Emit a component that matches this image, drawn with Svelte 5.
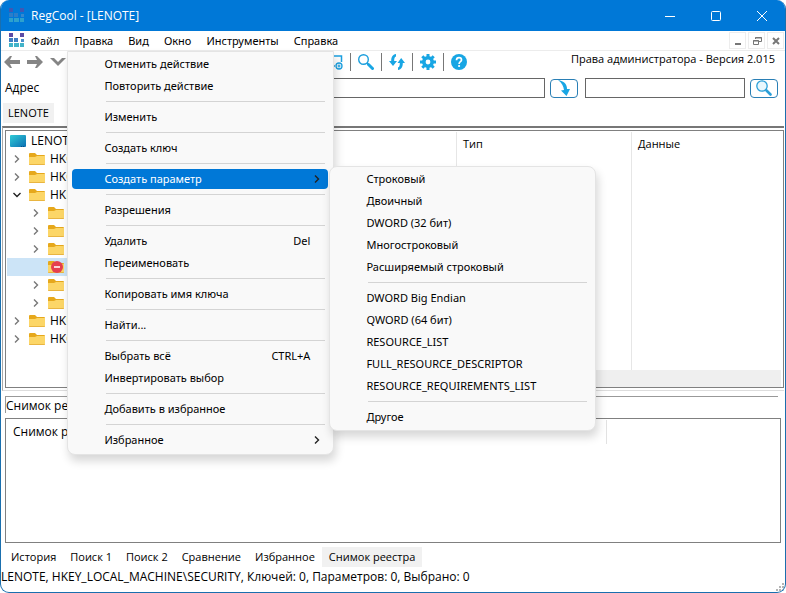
<script lang="ts">
	type Entry = { label?: string; keys?: string; sub?: boolean; sep?: boolean };

	const sep: Entry = { sep: true };

	const menus: string[] = ['Файл', 'Правка', 'Вид', 'Окно', 'Инструменты', 'Справка'];

	const editMenu: Entry[] = [
		{ label: 'Отменить действие' },
		{ label: 'Повторить действие' },
		sep,
		{ label: 'Изменить' },
		sep,
		{ label: 'Создать ключ' },
		sep,
		{ label: 'Создать параметр', sub: true },
		sep,
		{ label: 'Разрешения' },
		sep,
		{ label: 'Удалить', keys: 'Del' },
		{ label: 'Переименовать' },
		sep,
		{ label: 'Копировать имя ключа' },
		sep,
		{ label: 'Найти...' },
		sep,
		{ label: 'Выбрать всё', keys: 'CTRL+A' },
		{ label: 'Инвертировать выбор' },
		sep,
		{ label: 'Добавить в избранное' },
		sep,
		{ label: 'Избранное', sub: true }
	];

	const valueMenu: Entry[] = [
		{ label: 'Строковый' },
		{ label: 'Двоичный' },
		{ label: 'DWORD (32 бит)' },
		{ label: 'Многостроковый' },
		{ label: 'Расширяемый строковый' },
		sep,
		{ label: 'DWORD Big Endian' },
		{ label: 'QWORD (64 бит)' },
		{ label: 'RESOURCE_LIST' },
		{ label: 'FULL_RESOURCE_DESCRIPTOR' },
		{ label: 'RESOURCE_REQUIREMENTS_LIST' },
		sep,
		{ label: 'Другое' }
	];

	const keys = [
		{ name: 'HKCR' },
		{ name: 'HKCU' },
		{ name: 'HKLM', open: true },
		{ child: true },
		{ child: true },
		{ child: true },
		{ child: true, denied: true },
		{ child: true },
		{ child: true },
		{ name: 'HKU' },
		{ name: 'HKCC' }
	];

	const views: string[] = ['История', 'Поиск 1', 'Поиск 2', 'Сравнение', 'Избранное', 'Снимок реестра'];

	let openMenu: string = $state('Правка');
	let openSub: string = $state('Создать параметр');
	let view: string = $state('Снимок реестра');
	let address: string = $state('');
	let query: string = $state('');
</script>

{#snippet logo()}
	<svg class="logo" viewBox="0 0 15 15" width="15" height="15" aria-hidden="true">
		<path fill="#5b4ba5" d="M0 0h4v4H0zM11 0h4v4h-4z" />
		<path fill="#3f7fc4" d="M0 5h4v4H0zM5 5h4v4H5z" />
		<path fill="#4a8fcc" d="M12 6h3v3h-3z" />
		<path fill="#41b3c9" d="M0 10h4v4H0zM5 10h5v4H5zM11 10h4v4h-4z" />
	</svg>
{/snippet}

{#snippet folder(denied: boolean)}
	<svg class="folder" viewBox="0 0 16 14" width="16" height="14" aria-hidden="true">
		<path fill="#e6a81c" d="M0 2a1 1 0 0 1 1-1h5l2 2h7a1 1 0 0 1 1 1v3H0z" />
		<path fill="#fcd667" d="M0 5h6l2-1h8v8a1 1 0 0 1-1 1H1a1 1 0 0 1-1-1z" />
		<path fill="#e9b541" d="M0 12h16a1 1 0 0 1-1 1H1a1 1 0 0 1-1-1z" />
		{#if denied}
			<circle cx="9" cy="7" r="6" fill="#e5404f" />
			<path stroke="#fbd5d8" stroke-width="2" d="M6 7h6" />
		{/if}
	</svg>
{/snippet}

{#snippet chevron()}
	<svg class="chevron" viewBox="0 0 8 10" width="8" height="10" aria-hidden="true">
		<path fill="none" stroke="currentColor" stroke-width="1.4" d="M2 1.5 5.5 5 2 8.5" />
	</svg>
{/snippet}

<div class="window">
	<header class="titlebar">
		{@render logo()}
		<h1>RegCool - [LENOTE]</h1>
		<button aria-label="Свернуть">
			<svg viewBox="0 0 12 12" width="12" height="12"><path d="M1 6.5h10" /></svg>
		</button>
		<button aria-label="Развернуть">
			<svg viewBox="0 0 12 12" width="12" height="12"><rect x="1.5" y="1.5" width="9" height="9" rx="1" /></svg>
		</button>
		<button aria-label="Закрыть">
			<svg viewBox="0 0 12 12" width="12" height="12"><path d="M1 1l10 10M11 1L1 11" /></svg>
		</button>
	</header>

	<nav class="menubar">
		{@render logo()}
		{#each menus as name}
			<div class="menu">
				<button class="menu-title" onclick={() => (openMenu = name)}>{name}</button>
				{#if name === 'Правка' && openMenu === name}
					<div class="popup">
						{#each editMenu as item}
							{#if item.sep}
								<hr />
							{:else}
								<div class="entry">
									<button class:active={openSub === item.label} onclick={() => (openSub = item.label)}>
										<span>{item.label}</span>
										{#if item.keys}<kbd>{item.keys}</kbd>{/if}
										{#if item.sub}{@render chevron()}{/if}
									</button>
									{#if item.label === 'Создать параметр' && openSub === item.label}
										<div class="popup submenu">
											{#each valueMenu as value}
												{#if value.sep}
													<hr />
												{:else}
													<div class="entry"><button><span>{value.label}</span></button></div>
												{/if}
											{/each}
										</div>
									{/if}
								</div>
							{/if}
						{/each}
					</div>
				{/if}
			</div>
		{/each}
		<div class="mdi">
			<button aria-label="Свернуть окно">
				<svg viewBox="0 0 10 10" width="10" height="10"><path stroke-width="2" d="M2 8h6" /></svg>
			</button>
			<button aria-label="Восстановить окно">
				<svg viewBox="0 0 10 10" width="10" height="10"><path d="M3.5 3V1.5h6v4H7M3 2h7M1.5 4.5h5v4h-5zM1 5h6" /></svg>
			</button>
			<button aria-label="Закрыть окно">
				<svg viewBox="0 0 10 10" width="10" height="10"><path stroke-width="2" d="M2 2l6 6M8 2L2 8" /></svg>
			</button>
		</div>
	</nav>

	<div class="toolbar">
		<div class="history">
			<button aria-label="Назад">
				<svg viewBox="0 0 16 12" width="16" height="12"><path d="M0 6l6-6h2L6 4h10v4H6l2 4H6z" /></svg>
			</button>
			<button aria-label="Вперёд">
				<svg viewBox="0 0 16 12" width="16" height="12"><path d="M16 6l-6-6H8l2 4H0v4h10l-2 4h2z" /></svg>
			</button>
			<button aria-label="Список">
				<svg viewBox="0 0 16 12" width="16" height="12"><path d="M0 2h4l4 4 4-4h4L8 10z" /></svg>
			</button>
		</div>
		<div class="tools">
			<button aria-label="Добавить">
				<svg viewBox="0 0 16 16" width="16" height="16">
					<path fill="none" stroke="#1ba1e2" stroke-width="1.500" d="M1 2h13.500v6M1 2v10h7" />
					<circle cx="12" cy="12" r="3" fill="#fff" stroke="#1ba1e2" stroke-width="1.300" />
					<path stroke="#1ba1e2" stroke-width="1.200" d="M12 10.500v3M10.500 12h3" />
				</svg>
			</button>
			<button aria-label="Найти">
				<svg viewBox="0 0 16 16" width="16" height="16">
					<circle cx="5.500" cy="5.500" r="4.800" fill="none" stroke="#1c9fdd" stroke-width="1.400" />
					<path stroke="#18a6e4" stroke-width="3" stroke-linecap="round" d="M10.500 10.500l4 4" />
					<path stroke="#1c9fdd" stroke-width="1.500" d="M9 9l2 2" />
				</svg>
			</button>
			<button aria-label="Обновить">
				<svg viewBox="0 0 16 16" width="16" height="16">
					<path fill="#18a6e4" d="M7 0v2.500C5.500 3 5.200 4.500 5.200 7H8l-4 5-4-5h2.200C2.200 3 3.500.7 7 0z" />
					<path fill="#18a6e4" d="M9 16v-2.500c1.500-.5 1.800-2 1.800-4.500H8.500l3.700-5L16 9h-2.200c0 4-1.300 6.300-4.800 7z" />
				</svg>
			</button>
			<button aria-label="Настройки">
				<svg viewBox="0 0 16 16" width="16" height="16">
					<circle cx="8" cy="8" r="4.200" fill="none" stroke="#18a6e4" stroke-width="3.600" />
					<path stroke="#18a6e4" stroke-width="3" d="M8 0v3M8 13v3M0 8h3M13 8h3M2.300 2.300l2.200 2.200M11.500 11.500l2.200 2.200M13.700 2.300l-2.200 2.200M4.500 11.500l-2.200 2.200" />
				</svg>
			</button>
			<button aria-label="Справка">
				<svg viewBox="0 0 16 16" width="16" height="16">
					<circle cx="8" cy="8" r="8" fill="#18a6e4" />
					<path fill="none" stroke="#fff" stroke-width="1.700" d="M5.500 6.200C5.500 4.600 6.500 3.700 8 3.700s2.500.9 2.500 2.200c0 1.700-2.400 1.900-2.400 4" />
					<circle cx="8.100" cy="12" r="1.100" fill="#fff" />
				</svg>
			</button>
		</div>
		<p class="rights">Права администратора - Версия 2.015</p>
	</div>

	<form class="address" onsubmit={(e) => e.preventDefault()}>
		<label for="address">Адрес</label>
		<input id="address" class="path" type="text" bind:value={address} />
		<button aria-label="Перейти">
			<svg viewBox="0 0 16 16" width="16" height="16"><path fill="#18a6e4" d="M2 0c6 1 9 4 9 9h3l-3.500 7L5 10.500 8 10C7.500 6 6 3 2 0z" /></svg>
		</button>
		<input class="search" type="text" aria-label="Поиск" bind:value={query} />
		<button aria-label="Искать">
			<svg viewBox="0 0 16 16" width="16" height="16">
				<circle cx="6" cy="6" r="5.200" fill="#e8f7fd" stroke="#2a9fd8" stroke-width="1.300" />
				<path stroke="#2a9fd8" stroke-width="2.600" stroke-linecap="round" d="M10.500 10.500l4 4" />
			</svg>
		</button>
	</form>

	<div class="tabs"><button>LENOTE</button></div>

	<main>
		<div class="browser">
			<ul class="tree">
				<li>
					<svg class="computer" viewBox="0 0 16 13" width="16" height="13" aria-hidden="true">
						<defs>
							<linearGradient id="screen" x1="0" y1="0" x2="1" y2="1">
								<stop offset="0" stop-color="#2fcbd6" />
								<stop offset="1" stop-color="#0b6fb3" />
							</linearGradient>
						</defs>
						<rect width="16" height="12" rx="1" fill="url(#screen)" />
						<path stroke="#0a4f86" stroke-dasharray="1 1" d="M11 11.500h4" />
					</svg>
					LENOTE
				</li>
				{#each keys as key}
					<li class:child={key.child} class:selected={key.denied}>
						<span class="twisty" class:open={key.open}>
							{#if !key.denied}{@render chevron()}{/if}
						</span>
						{@render folder(!!key.denied)}
						{key.name ?? ''}
					</li>
				{/each}
			</ul>
			<div class="values">
				<table>
					<thead>
						<tr><th class="name"></th><th class="type">Тип</th><th>Данные</th></tr>
					</thead>
					<tbody>
						<tr><td></td><td></td><td></td></tr>
					</tbody>
				</table>
				<div class="scrollbar"></div>
			</div>
		</div>
	</main>

	<section class="snapshot">
		<h2>Снимок реестра</h2>
		<div class="list">
			<span>Снимок реестра</span>
		</div>
	</section>

	<div class="views">
		{#each views as name}
			<button class:active={view === name} onclick={() => (view = name)}>{name}</button>
		{/each}
	</div>

	<footer>
		<span>LENOTE, HKEY_LOCAL_MACHINE\SECURITY, Ключей: 0, Параметров: 0, Выбрано: 0</span>
		<svg viewBox="0 0 9 9" width="9" height="9" aria-hidden="true">
			<path fill="#b4b4b4" d="M6 0h2v2H6zM3 3h2v2H3zM6 3h2v2H6zM0 6h2v2H0zM3 6h2v2H3zM6 6h2v2H6z" />
		</svg>
	</footer>
</div>

<style>
	:global(body) {
		margin: 0;
		background: #fff;
	}

	.window {
		display: flex;
		flex-direction: column;
		box-sizing: border-box;
		min-height: 100vh;
		border: 1px solid #1a6fae;
		border-top: none;
		border-radius: 9px;
		overflow: hidden;
		background: #fff;
		color: #000;
		font: 12px/16px "Open Sans", "Noto Sans", sans-serif;
	}

	button {
		display: flex;
		align-items: center;
		justify-content: center;
		padding: 0;
		border: none;
		background: none;
		color: inherit;
		font: inherit;
		white-space: nowrap;
	}

	h1,
	h2,
	p,
	ul {
		margin: 0;
		padding: 0;
		font-size: 12px;
		font-weight: 400;
	}

	svg {
		flex: none;
	}

	.titlebar {
		display: flex;
		height: 31px;
		align-items: center;
		padding-left: 8px;
		background: #0078d7;
		color: #fff;
	}

	.titlebar h1 {
		flex: 1;
		padding-left: 7px;
	}

	.titlebar button {
		width: 46px;
		height: 31px;
	}

	.titlebar button svg {
		fill: none;
		stroke: #fff;
	}

	.titlebar .logo {
		opacity: 0.7;
	}

	.menubar {
		display: flex;
		height: 19px;
		align-items: center;
		padding-left: 8px;
		border-bottom: 1px solid #ececec;
		font-family: "Noto Sans", "Open Sans", sans-serif;
		font-size: 11px;
	}

	.menu {
		position: relative;
	}

	.menu-title {
		height: 20px;
		padding: 0 8px 0 7px;
	}

	.popup {
		position: absolute;
		z-index: 10;
		top: 100%;
		left: 0;
		box-sizing: border-box;
		width: 267px;
		padding: 1px 5px 3px 4px;
		border: 1px solid #e4e4e4;
		border-radius: 0 0 8px 8px;
		background: #f9f9f9;
		box-shadow: 2px 6px 10px rgba(0, 0, 0, 0.16);
	}

	.submenu {
		top: -2px;
		left: 100%;
		margin-left: 1px;
		padding: 1px 5px 2px 4px;
		border-radius: 8px;
	}

	.popup hr {
		height: 1px;
		margin: 4px 3px 4px 34px;
		border: none;
		background: #d4d4d4;
	}

	.entry {
		position: relative;
		padding: 1px 0;
	}

	.entry button {
		width: 100%;
		height: 20px;
		padding: 0 7px 0 32px;
		border-radius: 4px;
	}

	.entry button span {
		flex: 1;
		text-align: left;
	}

	.entry button.active {
		background: #0078d7;
		color: #fff;
	}

	.entry .chevron {
		color: #222;
	}

	kbd {
		width: 43px;
		padding-right: 11px;
		font: inherit;
		text-align: right;
	}

	.mdi {
		display: flex;
		gap: 2px;
		margin-left: auto;
		padding-right: 1px;
	}

	.mdi button {
		width: 17px;
		height: 17px;
		border: 1px solid #ededed;
	}

	.mdi svg {
		fill: none;
		stroke: #777;
	}

	.toolbar {
		display: flex;
		height: 27px;
		padding: 0 10px 0 3px;
	}

	.history {
		display: flex;
		height: 22px;
		gap: 7px;
	}

	.history svg {
		fill: #858585;
	}

	.tools {
		display: flex;
		height: 22px;
		align-items: center;
		margin-left: 253px;
	}

	.tools button {
		width: 31px;
		height: 18px;
	}

	.tools button + button {
		border-left: 1px solid #777;
	}

	.rights {
		flex: 1;
		font-size: 11px;
		text-align: right;
		white-space: nowrap;
	}

	.address {
		display: flex;
		height: 20px;
		align-items: center;
		padding: 0 7px 0 4px;
	}

	.address label {
		width: 64px;
	}

	.address input {
		box-sizing: border-box;
		height: 20px;
		padding: 0 4px;
		border: 1px solid #666;
		background: #fff;
		font: inherit;
	}

	.path {
		flex: 1;
		min-width: 0;
	}

	.search {
		width: 160px;
		margin-left: 7px;
	}

	.address button {
		width: 28px;
		height: 19px;
		margin-left: 5px;
		border: 1px solid #2a7fb5;
		border-radius: 4px;
	}

	.tabs {
		display: flex;
		padding: 5px 2px 3px;
		font-size: 11px;
	}

	.tabs button {
		height: 20px;
		padding: 0 5px;
		background: #f1f1f1;
	}

	main {
		display: flex;
		flex: 1;
		margin: 0 1px;
		padding: 2px 0 2px 2px;
		border: 1px solid #aaa;
		border-top: 2px solid #777;
		border-right: none;
		border-bottom-color: #ddd;
	}

	.browser {
		display: flex;
		flex: 1;
		border: 1px solid #808080;
	}

	.tree {
		box-sizing: border-box;
		width: 200px;
		padding: 1px;
		list-style: none;
	}

	.tree li {
		display: flex;
		height: 18px;
		align-items: center;
		gap: 5px;
		padding-left: 3px;
	}

	.tree .child {
		padding-left: 22px;
	}

	.tree .selected {
		background: #cce4f7;
	}

	.twisty {
		display: flex;
		width: 14px;
		justify-content: center;
		color: #777;
	}

	.twisty.open {
		color: #222;
		transform: rotate(90deg);
	}

	.values {
		display: flex;
		flex: 1;
		flex-direction: column;
		padding: 1px 2px 0 0;
	}

	table {
		flex: 1;
		display: flex;
		flex-direction: column;
	}

	thead,
	tbody,
	tr {
		display: flex;
	}

	tbody,
	tbody tr {
		flex: 1;
	}

	th,
	td {
		box-sizing: border-box;
		flex: 1;
		padding: 0 6px;
		border-left: 1px solid #e6e6e6;
	}

	th {
		height: 24px;
		font-size: 11px;
		font-weight: 400;
		line-height: 24px;
		text-align: left;
	}

	th:nth-child(1),
	td:nth-child(1) {
		flex: 0 0 250px;
		border: none;
	}

	th:nth-child(2),
	td:nth-child(2) {
		flex: 0 0 175px;
	}

	.scrollbar {
		height: 17px;
		background: #efefef;
	}

	.snapshot {
		padding: 5px 4px 0;
	}

	.snapshot h2 {
		height: 16px;
		margin-right: 3px;
		border: 1px solid #999;
		border-width: 1px 0 0 1px;
		line-height: 18px;
	}

	.list {
		box-sizing: border-box;
		height: 125px;
		margin-top: 5px;
		padding: 1px;
		border: 1px solid #808080;
	}

	.list span {
		display: block;
		box-sizing: border-box;
		width: 600px;
		height: 24px;
		padding-left: 6px;
		border-right: 1px solid #e2e2e2;
		line-height: 24px;
	}

	.views {
		display: flex;
		padding: 4px 3px 0;
		font-size: 11px;
	}

	.views button {
		height: 20px;
		padding: 0 7px;
	}

	.views .active {
		background: #f1f1f1;
	}

	footer {
		display: flex;
		height: 25px;
		align-items: flex-start;
		justify-content: space-between;
		line-height: 20px;
	}

	footer svg {
		align-self: flex-end;
	}
</style>
